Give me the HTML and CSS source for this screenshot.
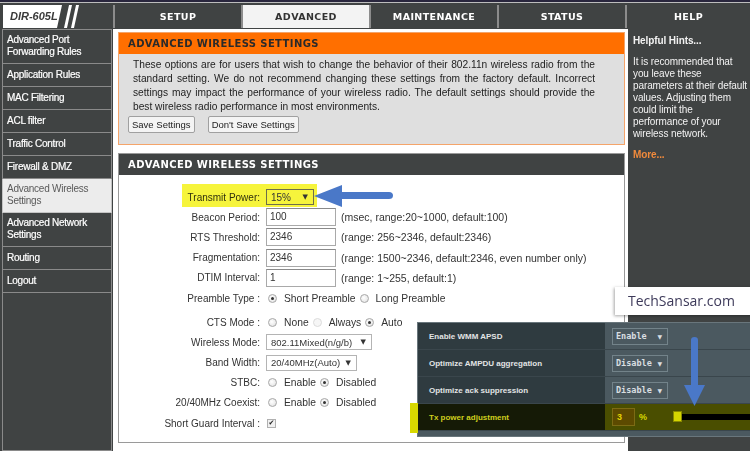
FILE: index.html
```html
<!DOCTYPE html>
<html lang="en">
<head>
    <meta charset="UTF-8">
    <meta name="viewport" content="width=device-width, initial-scale=1.0">
    <title>DIR-605L Advanced Wireless Settings</title>
    <link rel="stylesheet" href="styles.css">
</head>
<body>
<div class="page">
    <div class="topline"></div>
    <div class="header">
        <div class="logo">
            <span class="logo-name">DIR-605L</span>
            <svg class="logo-slash" width="24" height="23" viewBox="0 0 24 23">
                <polygon points="6,0 9,0 4,23 1,23" fill="#fff"/>
                <polygon points="13,0 16,0 11,23 8,23" fill="#fff"/>
            </svg>
        </div>
        <div class="tab">SETUP</div>
        <div class="tab tab-on">ADVANCED</div>
        <div class="tab">MAINTENANCE</div>
        <div class="tab">STATUS</div>
        <div class="tab">HELP</div>
    </div>

    <div class="main-row">
        <nav class="side">
            <a class="two">Advanced Port<br>Forwarding Rules</a>
            <a>Application Rules</a>
            <a>MAC Filtering</a>
            <a>ACL filter</a>
            <a>Traffic Control</a>
            <a>Firewall &amp; DMZ</a>
            <a class="two on">Advanced Wireless<br>Settings</a>
            <a class="two">Advanced Network<br>Settings</a>
            <a>Routing</a>
            <a>Logout</a>
            <span class="side-empty"></span>
        </nav>

        <div class="content">
            <div class="intro">
                <h2 class="intro-title">ADVANCED WIRELESS SETTINGS</h2>
                <div class="intro-body">
                    <p>
                        <span class="ln">These options are for users that wish to change the behavior of their 802.11n wireless radio from the</span>
                        <span class="ln">standard setting. We do not recommend changing these settings from the factory default. Incorrect</span>
                        <span class="ln">settings may impact the performance of your wireless radio. The default settings should provide the</span>
                        <span class="ln last">best wireless radio performance in most environments.</span>
                    </p>
                    <div class="btns">
                        <button>Save Settings</button>
                        <button>Don't Save Settings</button>
                    </div>
                </div>
            </div>

            <div class="section">
                <h2 class="section-title">ADVANCED WIRELESS SETTINGS</h2>
                <div class="form">
                    <div class="row">
                        <label>Transmit Power:</label>
                        <div class="field"><span class="select sel-tx">15%<i>&#9660;</i></span></div>
                    </div>
                    <div class="row">
                        <label>Beacon Period:</label>
                        <div class="field"><span class="text-in">100</span><span class="desc">(msec, range:20~1000, default:100)</span></div>
                    </div>
                    <div class="row">
                        <label>RTS Threshold:</label>
                        <div class="field"><span class="text-in">2346</span><span class="desc">(range: 256~2346, default:2346)</span></div>
                    </div>
                    <div class="row">
                        <label>Fragmentation:</label>
                        <div class="field"><span class="text-in">2346</span><span class="desc">(range: 1500~2346, default:2346, even number only)</span></div>
                    </div>
                    <div class="row">
                        <label>DTIM Interval:</label>
                        <div class="field"><span class="text-in">1</span><span class="desc">(range: 1~255, default:1)</span></div>
                    </div>
                    <div class="row">
                        <label>Preamble Type :</label>
                        <div class="field"><span class="radio on"></span><span class="opt">Short Preamble</span><span class="radio"></span><span class="opt">Long Preamble</span></div>
                    </div>
                    <div class="row row-gap">
                        <label>CTS Mode :</label>
                        <div class="field"><span class="radio"></span><span class="opt">None</span><span class="radio dim"></span><span class="opt">Always</span><span class="radio on"></span><span class="opt">Auto</span></div>
                    </div>
                    <div class="row">
                        <label>Wireless Mode:</label>
                        <div class="field"><span class="select sel-mode">802.11Mixed(n/g/b)<i>&#9660;</i></span></div>
                    </div>
                    <div class="row">
                        <label>Band Width:</label>
                        <div class="field"><span class="select sel-band">20/40MHz(Auto)<i>&#9660;</i></span></div>
                    </div>
                    <div class="row">
                        <label>STBC:</label>
                        <div class="field"><span class="radio"></span><span class="opt">Enable</span><span class="radio on"></span><span class="opt">Disabled</span></div>
                    </div>
                    <div class="row">
                        <label>20/40MHz Coexist:</label>
                        <div class="field"><span class="radio"></span><span class="opt">Enable</span><span class="radio on"></span><span class="opt">Disabled</span></div>
                    </div>
                    <div class="row">
                        <label>Short Guard Interval :</label>
                        <div class="field"><span class="check">&#10004;</span></div>
                    </div>
                </div>
            </div>
        </div>

        <div class="help">
            <h3>Helpful Hints...</h3>
            <p>It is recommended that<br>you leave these<br>parameters at their default<br>values. Adjusting them<br>could limit the<br>performance of your<br>wireless network.</p>
            <a class="more">More...</a>
        </div>
    </div>

    <!-- annotations pasted over the page -->
    <div class="hl-tx"></div>
    <svg class="arrow-left" width="82" height="24" viewBox="0 0 82 24">
        <path d="M1 12 L29 1 L29 8 L76 8 Q80 8 80 11.5 Q80 15 76 15 L29 15 L29 23 Z" fill="#4a78c8"/>
    </svg>

    <div class="brand">TechSansar.com</div>

    <div class="asus">
        <div class="asus-row">
            <div class="asus-label">Enable WMM APSD</div>
            <div class="asus-val"><span class="asus-sel">Enable<i>&#9660;</i></span></div>
        </div>
        <div class="asus-row">
            <div class="asus-label">Optimize AMPDU aggregation</div>
            <div class="asus-val"><span class="asus-sel">Disable<i>&#9660;</i></span></div>
        </div>
        <div class="asus-row">
            <div class="asus-label">Optimize ack suppression</div>
            <div class="asus-val"><span class="asus-sel">Disable<i>&#9660;</i></span></div>
        </div>
        <div class="asus-row asus-hot">
            <div class="asus-label">Tx power adjustment</div>
            <div class="asus-val">
                <span class="asus-num">3</span><span class="asus-pct">%</span>
                <span class="slider"><span class="knob"></span></span>
            </div>
        </div>
    </div>
    <div class="hl-strip"></div>
    <svg class="arrow-down" width="24" height="72" viewBox="0 0 24 72">
        <path d="M8 4 Q8 1 11.5 1 Q15 1 15 4 L15 49 L22 49 L11.5 70 L1 49 L8 49 Z" fill="#4a78c8"/>
    </svg>
</div>
</body>
</html>
```

FILE: styles.css
```css
* {
    box-sizing: border-box;
}
body {
    margin: 0;
    background: #404343;
    font-family: "Liberation Sans", Arial, sans-serif;
    font-size: 10px;
    color: #2a2a2a;
}
.page {
    position: relative;
    width: 750px;
    height: 451px;
    overflow: hidden;
    background: #404343;
}

/* header */
.topline {
    height: 2px;
    background: #29263d;
}
.header {
    display: grid;
    grid-template-columns: 113px repeat(4, 128px) 1fr;
    height: 26px;
    border-top: 1px solid #bdbdbd;
    padding-top: 2px;
}
.logo {
    display: flex;
    align-items: stretch;
    padding-left: 3px;
}
.logo-name {
    width: 59px;
    padding-left: 7px;
    background: #fff;
    clip-path: polygon(0 0, 100% 0, calc(100% - 5px) 100%, 0 100%);
    font-weight: bold;
    font-style: italic;
    font-size: 11px;
    line-height: 23px;
    color: #3a3a3a;
}
.logo-slash {
    margin-left: 1px;
}
.tab {
    border-left: 2px solid #8c8c8c;
    text-align: center;
    line-height: 23px;
    font-family: "DejaVu Sans", Verdana, sans-serif;
    font-weight: bold;
    font-size: 9.5px;
    letter-spacing: 0.4px;
    color: #fff;
}
.tab-on {
    background: #f3f3f3;
    color: #333;
}

/* layout */
.main-row {
    display: grid;
    grid-template-columns: 113px 515px 122px;
    margin-top: 1px;
    height: 422px;
}

/* left menu */
.side {
    display: flex;
    flex-direction: column;
}
.side a, .side-empty {
    display: block;
    margin-left: 2px;
    width: 110px;
    padding: 5px 3px 5px 4px;
    line-height: 12px;
    border: 1px solid #8a8a8a;
    border-top: none;
    color: #fff;
    letter-spacing: -0.25px;
    -webkit-text-stroke: 0.2px #fff;
}
.side a:first-child {
    border-top: 1px solid #8a8a8a;
}
.side a.two {
    padding-top: 4px;
}
.side a.on {
    background: #ececec;
    color: #5a5a5a;
    border-color: #c4c4c4;
    -webkit-text-stroke: 0;
}
.side-empty {
    flex: 1;
}

/* main content */
.content {
    background: #fff;
    padding: 3px 3px 0 5px;
}
.intro {
    border: 1px solid #f4a46a;
}
.intro-title, .section-title {
    margin: 0;
    height: 21px;
    line-height: 21px;
    padding-left: 9px;
    font-family: "DejaVu Sans", Verdana, sans-serif;
    font-size: 10px;
    font-weight: bold;
    letter-spacing: 0.4px;
}
.intro-title {
    background: #ff6f00;
    color: #2a2a2a;
}
.intro-body {
    background: #dfdfdf;
    padding: 4px 9px 11px;
}
.intro-body p {
    width: 462px;
    margin: 0 0 0 5px;
    line-height: 14px;
    font-size: 10.2px;
    color: #222;
}
.ln {
    display: block;
    text-align: justify;
    text-align-last: justify;
}
.ln.last {
    text-align-last: left;
}
.btns {
    display: flex;
    gap: 13px;
    margin-top: 2px;
}
.btns button {
    height: 17px;
    padding: 0 3px;
    border: 1px solid #a0a0a0;
    border-radius: 2px;
    background: #f4f4f4;
    font-family: "Liberation Sans", Arial, sans-serif;
    font-size: 9.5px;
    color: #222;
}

.section {
    margin-top: 8px;
    border: 1px solid #9a9a9a;
}
.section-title {
    background: #404343;
    color: #fff;
}
.form {
    padding: 12px 0 9px;
}
.row {
    display: grid;
    grid-template-columns: 141px 1fr;
    column-gap: 6px;
    align-items: center;
    height: 20.2px;
}
.row-gap {
    margin-top: 4px;
}
.row label {
    text-align: right;
    color: #333;
    white-space: nowrap;
}
.field {
    display: flex;
    align-items: center;
    color: #333;
    white-space: nowrap;
}
.text-in {
    width: 70px;
    height: 18px;
    line-height: 16px;
    padding-left: 3px;
    border: 1px solid #a9a9a9;
    border-top-color: #8a8a8a;
    background: #fff;
}
.desc {
    margin-left: 5px;
    font-size: 10.5px;
}
.select {
    display: flex;
    align-items: center;
    justify-content: space-between;
    height: 16px;
    padding: 0 5px 0 4px;
    border: 1px solid #b4b4b4;
    background: #fff;
    font-size: 9.5px;
}
.select i {
    font-style: normal;
    font-size: 7px;
    font-family: "DejaVu Sans", sans-serif;
}
.sel-tx {
    position: relative;
    z-index: 2;
    width: 48px;
    border-color: #6e6e4a;
    background: transparent;
    font-size: 10px;
}
.sel-mode {
    width: 106px;
}
.sel-band {
    width: 91px;
}
.radio {
    position: relative;
    display: inline-block;
    width: 9px;
    height: 9px;
    margin: 0 7px 0 2px;
    border-radius: 50%;
    border: 1px solid #a8a8a8;
    background: radial-gradient(circle at 40% 40%, #fff, #dedede);
}
.radio.on::after {
    content: "";
    position: absolute;
    left: 2px;
    top: 2px;
    width: 3px;
    height: 3px;
    border-radius: 50%;
    background: #333;
}
.radio.dim {
    border-color: #dcdcdc;
    background: #f6f6f6;
}
.opt {
    margin-right: 2px;
    font-size: 10.3px;
}
.check {
    display: inline-block;
    width: 9px;
    height: 9px;
    margin-left: 1px;
    border: 1px solid #b0b0b0;
    background: #f0f0f0;
    font-family: "DejaVu Sans", sans-serif;
    font-size: 7px;
    line-height: 7px;
    text-align: center;
    color: #222;
}

/* help column */
.help {
    padding: 6px 2px 0 5px;
    color: #f2f2f2;
    white-space: nowrap;
    letter-spacing: -0.1px;
}
.help h3 {
    margin: 0;
    font-size: 10px;
    line-height: 12px;
}
.help p {
    margin: 9px 0 0;
    line-height: 12px;
}
.more {
    display: block;
    margin-top: 9px;
    line-height: 12px;
    font-weight: bold;
    color: #f08a3c;
}

/* annotations */
.hl-tx {
    position: absolute;
    left: 182px;
    top: 184px;
    width: 135px;
    height: 23px;
    background: #f6f43c;
    mix-blend-mode: multiply;
}
.arrow-left {
    position: absolute;
    left: 313px;
    top: 184px;
}
.brand {
    position: absolute;
    left: 615px;
    top: 287px;
    width: 145px;
    height: 28px;
    padding-left: 13px;
    background: #fff;
    box-shadow: -1px 1px 3px rgba(0, 0, 0, 0.35);
    font-family: "Open Sans", sans-serif;
    font-size: 14px;
    line-height: 28px;
    color: #3d3a5a;
}
.asus {
    position: absolute;
    left: 417px;
    top: 322px;
    width: 345px;
    height: 115px;
    border: 1px solid #69767c;
    background: #4b5960;
}
.asus-row {
    display: grid;
    grid-template-columns: 187px 1fr;
    height: 27px;
    border-bottom: 1px solid #3a464c;
}
.asus-label {
    display: flex;
    align-items: center;
    padding-left: 11px;
    background: #2f3b40;
    font-weight: bold;
    font-size: 8px;
    color: #e2e4e5;
}
.asus-val {
    display: flex;
    align-items: center;
    padding-left: 7px;
}
.asus-sel {
    display: flex;
    align-items: center;
    justify-content: space-between;
    width: 56px;
    height: 17px;
    padding: 0 5px 0 3px;
    border: 1px solid #73838a;
    font-family: "DejaVu Sans Mono", monospace;
    font-weight: bold;
    font-size: 8.5px;
    color: #d9dee0;
}
.asus-sel i {
    font-style: normal;
    font-size: 6px;
    font-family: "DejaVu Sans", sans-serif;
}
.asus-hot .asus-label {
    background: #151a06;
    color: #cfcf1e;
}
.asus-hot .asus-val {
    background: #4a4e00;
}
.asus-num {
    width: 23px;
    height: 18px;
    padding-left: 4px;
    line-height: 16px;
    border: 1px solid #7c6b14;
    background: #5d4a00;
    font-weight: bold;
    font-size: 9px;
    color: #e2d200;
}
.asus-pct {
    margin-left: 4px;
    font-weight: bold;
    font-size: 9px;
    color: #d8d800;
}
.slider {
    position: relative;
    flex: 1;
    height: 6px;
    margin-left: 26px;
    background: #000;
}
.knob {
    position: absolute;
    left: 0;
    top: -3px;
    width: 9px;
    height: 11px;
    border: 1px solid #8a8a00;
    background: #d6d600;
}
.hl-strip {
    position: absolute;
    left: 410px;
    top: 403px;
    width: 8px;
    height: 30px;
    background: #d8d800;
}
.arrow-down {
    position: absolute;
    left: 683px;
    top: 336px;
}
```
